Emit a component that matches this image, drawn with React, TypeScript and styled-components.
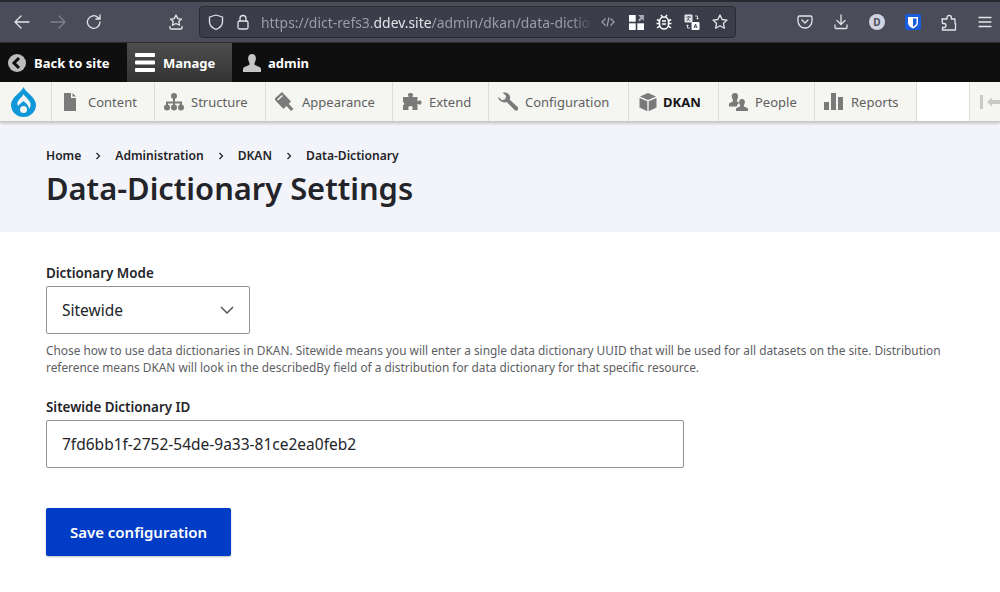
import React from 'react';
import styled, { createGlobalStyle } from 'styled-components';

const GlobalStyle = createGlobalStyle`
  html, body {
    margin: 0;
    padding: 0;
    background: #fff;
    overflow: hidden;
  }
  * {
    box-sizing: border-box;
  }
  body {
    font-family: "Noto Sans", sans-serif;
    color: #232429;
  }
`;

const Page = styled.div`
  width: 1000px;
  height: 592px;
  overflow: hidden;
  display: flex;
  flex-direction: column;
`;

/* browser chrome */
const Chrome = styled.div`
  height: 43px;
  flex: none;
  display: flex;
  align-items: center;
  background: #4b4c5a;
  border-top: 2px solid #2b2a33;
  border-bottom: 1px solid #2b2c36;
  padding-left: 13px;
`;

const NavButton = styled.div<{ $w: number }>`
  width: ${({ $w }) => $w}px;
  flex: none;
  display: flex;
  align-items: center;
  svg {
    display: block;
    flex: none;
  }
`;

const UrlBar = styled.div`
  width: 537px;
  height: 32px;
  flex: none;
  margin-left: 10px;
  display: flex;
  align-items: center;
  background: #3b3d4b;
  border: 1px solid #292a33;
  border-radius: 4px;
  padding-left: 8px;
  svg {
    flex: none;
  }
`;

const LockIcon = styled.svg`
  margin-left: 12px;
`;

const UrlText = styled.div`
  width: 331px;
  margin-left: 11px;
  flex: none;
  font-size: 13.9px;
  white-space: nowrap;
  color: #9b9ca6;
  mask-image: linear-gradient(to right, #000 94%, transparent 100%);
  b {
    font-weight: 400;
    color: #e2e3e8;
  }
`;

const Actions = styled.div`
  display: flex;
  align-items: center;
  margin-left: 2px;
`;

const ActionSlot = styled.div`
  width: 28px;
  height: 20px;
  display: flex;
  align-items: center;
  justify-content: center;
`;

const RightIcons = styled.div`
  display: flex;
  align-items: center;
  margin-left: 51px;
`;

const RightSlot = styled.div`
  width: 36px;
  height: 24px;
  display: flex;
  align-items: center;
  justify-content: center;
`;

const Avatar = styled.div`
  width: 16px;
  height: 16px;
  border-radius: 50%;
  background: #cfd3e2;
  color: #4b4c5a;
  font-size: 10px;
  font-weight: 700;
  display: flex;
  align-items: center;
  justify-content: center;
`;

const Shield = styled.div`
  width: 16px;
  height: 16px;
  border-radius: 2px;
  background: #175ddc;
  display: flex;
  align-items: center;
  justify-content: center;
`;

/* admin toolbar */
const TopBar = styled.div`
  height: 39px;
  flex: none;
  display: flex;
  background: #0f0f0f;
`;

const TopItem = styled.div<{ $w: number; $gap: number; $active?: boolean }>`
  width: ${({ $w }) => $w}px;
  display: flex;
  align-items: center;
  padding-left: 8px;
  gap: ${({ $gap }) => $gap}px;
  font-size: 13px;
  font-weight: 700;
  color: #fff;
  background: ${({ $active }) =>
    $active ? 'linear-gradient(to bottom, #4e4e4e, #333)' : 'transparent'};
`;

const AdminIcon = styled.svg`
  margin-left: 2px;
`;

const Tray = styled.div`
  height: 40px;
  flex: none;
  display: flex;
  background: #fff;
  border-bottom: 1px solid #c9c9c9;
  box-shadow: 0 1px 3px rgba(0, 0, 0, 0.25);
  position: relative;
  z-index: 1;
`;

const LogoCell = styled.div`
  width: 52px;
  flex: none;
  display: flex;
  align-items: center;
  padding-left: 11px;
  background: #f5f5f2;
  border-right: 1px solid #dcdcd8;
`;

const TrayItem = styled.div<{ $w: number; $strong?: boolean }>`
  width: ${({ $w }) => $w}px;
  flex: none;
  display: flex;
  align-items: center;
  padding-left: 9px;
  gap: ${({ $strong }) => ($strong ? 5 : 7)}px;
  background: #f5f5f2;
  border-right: 1px solid #dcdcd8;
  font-size: 13px;
  font-weight: ${({ $strong }) => ($strong ? 700 : 400)};
  color: ${({ $strong }) => ($strong ? '#161616' : '#5f5f5f')};
`;

const TrayIcon = styled.span`
  width: 20px;
  height: 20px;
  flex: none;
  display: flex;
  align-items: center;
  justify-content: center;
`;

const TraySpacer = styled.div`
  flex: 1;
`;

const TrayToggle = styled.div`
  width: 31px;
  flex: none;
  display: flex;
  align-items: center;
  padding-left: 10px;
  background: #f5f5f2;
  border-left: 1px solid #dcdcd8;
`;

/* page header */
const Header = styled.header`
  height: 110px;
  flex: none;
  background: #f3f4f9;
  padding: 26px 46px 0;
`;

const Crumbs = styled.nav`
  display: flex;
  align-items: center;
  height: 15px;
  font-size: 12.1px;
  font-weight: 600;
  color: #232429;
`;

const Sep = styled.span`
  width: 34px;
  display: flex;
  justify-content: center;
`;

const Title = styled.h1`
  margin: 6px 0 0;
  font-size: 30.85px;
  line-height: 38px;
  font-weight: 600;
  color: #232429;
`;

/* form */
const Form = styled.main`
  padding: 33px 46px 0;
  display: flex;
  flex-direction: column;
`;

const Label = styled.label`
  display: block;
  font-size: 13.4px;
  line-height: 16px;
  font-weight: 600;
  color: #232429;
  margin-bottom: 5px;
`;

const Select = styled.div`
  width: 204px;
  height: 48px;
  display: flex;
  align-items: center;
  justify-content: space-between;
  padding: 0 15px;
  border: 1px solid #919297;
  border-radius: 2px;
  font-size: 15.5px;
  color: #232429;
`;

const Help = styled.p`
  margin: 8px 0 0;
  width: 908px;
  font-size: 11.87px;
  line-height: 17px;
  color: #5d5e63;
`;

const SecondLabel = styled(Label)`
  margin-top: 23px;
`;

const TextInput = styled.div`
  width: 638px;
  height: 48px;
  display: flex;
  align-items: center;
  padding: 0 15px;
  border: 1px solid #919297;
  border-radius: 2px;
  font-size: 15.5px;
  color: #232429;
`;

const SaveButton = styled.button`
  width: 185px;
  height: 48px;
  margin-top: 40px;
  border: 0;
  border-radius: 2px;
  background: #003cc5;
  box-shadow: 0 1px 2px rgba(0, 0, 0, 0.25);
  color: #fff;
  font-family: inherit;
  font-size: 15px;
  font-weight: 600;
`;

const stroke = {
  fill: 'none',
  stroke: '#e4e4ea',
  strokeWidth: 1.3,
  strokeLinecap: 'round' as const,
  strokeLinejoin: 'round' as const,
};

const tray = '#7a7a7a';

const navItems = [
  {
    label: 'Content',
    w: 103,
    icon: <path d="M3 1h7v5h5v13H3z M11.500 1l3.500 3.500h-3.500z" fill={tray} />,
  },
  {
    label: 'Structure',
    w: 111,
    icon: (
      <g fill={tray}>
        <circle cx="10" cy="4" r="3" />
        <circle cx="3" cy="15.500" r="3" />
        <circle cx="10" cy="15.500" r="3" />
        <circle cx="17" cy="15.500" r="3" />
        <path d="M9 6h2v3.500h7V14h-2v-2.500h-5V14H9v-2.500H4V14H2V9.500h7z" />
      </g>
    ),
  },
  {
    label: 'Appearance',
    w: 127,
    icon: (
      <g fill={tray}>
        <path d="M-1 7l8-7 9 9.500-7.500 7.500z" />
        <path d="M11 13.500l2.200-2.200L18.500 17 16 19z" />
        <path d="M2 7.500L7 3l1 1-5 4.500z" fill="#f5f5f2" />
      </g>
    ),
  },
  {
    label: 'Extend',
    w: 96,
    icon: (
      <path
        d="M1 5h5.500v-1c-1.500-1.500 0-3 2-3s3.500 1.500 2 3v1h5v4h1c1.500-1 3-.5 3 1.500s-1.500 3-3 1.500h-1v6h-5v-1.500c.8-1.500-.5-2.500-2-2.500s-2.800 1-2 2.500v1.500h-5.500v-4.500c1-.5 1.500-1.500 1-2.500s-1-1-1-1z"
        fill={tray}
      />
    ),
  },
  {
    label: 'Configuration',
    w: 140,
    icon: (
      <path
        d="M0.500 5l3.500 3.200 3.200-.9.900-3.200L4.700.8c3.200-1.200 6.800.6 7.300 3.900.2 1-.1 2-.4 2.900l8 7.500c1 1 .8 2.300 0 3-.8.800-2 .8-3 0l-7.800-8c-3.800 1.400-9.300-2-8.300-5.100z"
        fill={tray}
      />
    ),
  },
  {
    label: 'DKAN',
    w: 90,
    strong: true,
    icon: (
      <g fill={tray}>
        <path d="M10 1l8 3.500-8 3.500-8-3.500z" />
        <path d="M1.500 6l7.800 3.300v10l-7.800-3.800z" />
        <path d="M18.500 6l-7.800 3.300v10l7.800-3.800z" />
      </g>
    ),
  },
  {
    label: 'People',
    w: 96,
    icon: (
      <g fill={tray}>
        <path d="M7 1c2.500 0 3.500 2 3 4.500-.3 1.500-1.200 2.500-1.200 3.500s2 1 3 2c-2 .5-3 2-3 3.500H1v-2.500c0-1.500 4-1.500 4-3.500 0-1-1-2-1.200-3.500C3.300 3 4.500 1 7 1z" />
        <path d="M14 7c2.300 0 3.200 1.800 2.800 3.800-.3 1.500-1 2.200-1 3 0 1.500 4.200 1.600 4.200 3.400V19H8v-1.800c0-1.800 4.200-1.900 4.200-3.400 0-.8-.7-1.500-1-3C10.800 8.800 11.700 7 14 7z" />
      </g>
    ),
  },
  {
    label: 'Reports',
    w: 102,
    icon: (
      <g fill={tray}>
        <rect x="0" y="10" width="5" height="8" />
        <rect x="7" y="1" width="5" height="17" />
        <rect x="14" y="5" width="5" height="13" />
      </g>
    ),
  },
];

const crumbs = ['Home', 'Administration', 'DKAN', 'Data-Dictionary'];

const App: React.FC = () => {
  return (
    <Page>
      <GlobalStyle />
      <Chrome>
        <NavButton $w={36}>
          <svg width="18" height="18" viewBox="0 0 18 18" {...stroke}>
            <path d="M16 9H2M8 3L2 9l6 6" />
          </svg>
        </NavButton>
        <NavButton $w={36}>
          <svg width="18" height="18" viewBox="0 0 18 18" {...stroke} stroke="#80818c">
            <path d="M2 9h14M10 3l6 6-6 6" />
          </svg>
        </NavButton>
        <NavButton $w={82}>
          <svg width="18" height="18" viewBox="0 0 18 18" {...stroke}>
            <path d="M15 9a6.300 6.300 0 1 1-2-4.600L15 6M15 2v4h-4" />
          </svg>
        </NavButton>
        <NavButton $w={22}>
          <svg width="18" height="18" viewBox="0 0 18 18" {...stroke}>
            <path d="M9 2l1.800 3.600 3.700.5-2.700 2.500.7 3.600L9 10.500l-3.500 1.700.7-3.600L3.500 6.100l3.700-.5zM3 13.500V15a1 1 0 0 0 1 1h10a1 1 0 0 0 1-1v-1.500" />
          </svg>
        </NavButton>
        <UrlBar>
          <svg width="16" height="18" viewBox="0 0 16 18" {...stroke}>
            <path d="M8 2l6.500 2v5c0 3.500-3 6-6.500 7.500C4.500 15 1.500 12.500 1.500 9V4z" />
          </svg>
          <LockIcon width="14" height="16" viewBox="0 0 14 16" {...stroke}>
            <rect x="2" y="7" width="10" height="8" rx="1.500" />
            <path d="M4 7V4.500a3 3 0 0 1 6 0V7" />
          </LockIcon>
          <UrlText>
            https://dict-refs3.<b>ddev.site</b>/admin/dkan/data-dictio
          </UrlText>
          <Actions>
            <ActionSlot>
              <svg width="14" height="10" viewBox="0 0 14 10" fill="none" stroke="#a2a3ad" strokeWidth="1.200">
                <path d="M4.500 1.500L1 5l3.500 3.500M9.500 1.500L13 5 9.500 8.500M8 .5l-2 9" />
              </svg>
            </ActionSlot>
            <ActionSlot>
              <svg width="15" height="15" viewBox="0 0 15 15" fill="#fff">
                <rect x="0" y="0" width="6.700" height="6.700" />
                <rect x="0" y="8.300" width="6.700" height="6.700" />
                <rect x="8.300" y="8.300" width="6.700" height="6.700" />
                <path d="M9 0h6v6l-2-2-2.500 2.500-1.500-1.500L11.500 2.500z" fill="#a9aab3" />
              </svg>
            </ActionSlot>
            <ActionSlot>
              <svg width="16" height="16" viewBox="0 0 16 16" fill="none" stroke="#fff" strokeWidth="1.500">
                <rect x="3.500" y="3" width="9" height="12" rx="4.500" />
                <path d="M5 1l1.500 2M11 1L9.500 3M1 5.500l2.500 1.500M15 5.500L12.500 7M.5 9.500h3M15.500 9.500h-3M1 14l2.500-2M15 14l-2.500-2M6 7h4M6 10h4" />
              </svg>
            </ActionSlot>
            <ActionSlot>
              <svg width="16" height="17" viewBox="0 0 16 17">
                <rect x="0.500" y="0.500" width="8" height="8" rx="1" fill="#e4e4ea" />
                <rect x="7.500" y="8" width="8" height="8" rx="1" fill="#fff" />
                <path d="M2 3h5M4.500 2v1M3 7l2.500-4M3.500 4.500L6 7" stroke="#4b4c5a" strokeWidth=".8" fill="none" />
                <path d="M10 14l1.500-4 1.500 4M10.600 12.800h1.800" stroke="#3a3c4a" strokeWidth=".9" fill="none" />
                <path d="M11 2h2.500v3M12.500 4l1 1.200 1-1.200M3.500 11v3H6M2.500 12l1-1.200 1 1.200" stroke="#e4e4ea" strokeWidth=".9" fill="none" />
              </svg>
            </ActionSlot>
            <ActionSlot>
              <svg width="18" height="18" viewBox="0 0 18 18" {...stroke}>
                <path d="M9 2l2.100 4.500 4.900.6-3.600 3.300 1 4.800L9 12.800l-4.400 2.400 1-4.800L2 7.100l4.900-.6z" />
              </svg>
            </ActionSlot>
          </Actions>
        </UrlBar>
        <RightIcons>
          <RightSlot>
            <svg width="16" height="16" viewBox="0 0 16 16" {...stroke}>
              <path d="M2.500 2h11A1.500 1.500 0 0 1 15 3.500V7a7 7 0 0 1-14 0V3.500A1.500 1.500 0 0 1 2.500 2zM5 6l3 3 3-3" />
            </svg>
          </RightSlot>
          <RightSlot>
            <svg width="16" height="16" viewBox="0 0 16 16" {...stroke}>
              <path d="M8 1v9M4 6.500L8 10.500l4-4M2 11v2.500a1 1 0 0 0 1 1h10a1 1 0 0 0 1-1V11" />
            </svg>
          </RightSlot>
          <RightSlot>
            <Avatar>D</Avatar>
          </RightSlot>
          <RightSlot>
            <Shield>
              <svg width="12" height="13" viewBox="0 0 12 13">
                <path d="M1 1h10v6c0 2.500-2.500 4.500-5 5.500C3.500 11.500 1 9.500 1 7z" fill="#fff" />
                <path d="M6 2.500h3.500V7c0 1.500-1.800 2.800-3.500 3.600z" fill="#175ddc" />
              </svg>
            </Shield>
          </RightSlot>
          <RightSlot>
            <svg width="16" height="17" viewBox="0 0 16 17" {...stroke}>
              <path d="M1 5h5V3.500a2.200 2.200 0 1 1 4.400 0V5H14v4.500l.5 0V16H1.500v-2.500h1.500a2 2 0 1 0 0-4H1.500z" />
            </svg>
          </RightSlot>
          <RightSlot>
            <svg width="14" height="12" viewBox="0 0 14 12" {...stroke}>
              <path d="M1 1.500h12M1 6h12M1 10.500h12" />
            </svg>
          </RightSlot>
        </RightIcons>
      </Chrome>

      <TopBar>
        <TopItem $w={127} $gap={8}>
          <svg width="18" height="18" viewBox="0 0 18 18">
            <circle cx="9" cy="9" r="9" fill="#bdbdbd" />
            <path d="M11 4L6 9l5 5" fill="none" stroke="#0f0f0f" strokeWidth="3" />
          </svg>
          Back to site
        </TopItem>
        <TopItem $w={105} $gap={8} $active>
          <svg width="20" height="19" viewBox="0 0 20 19" fill="#fff">
            <rect y="0" width="20" height="4" rx="1" />
            <rect y="7.500" width="20" height="4" rx="1" />
            <rect y="15" width="20" height="4" rx="1" />
          </svg>
          Manage
        </TopItem>
        <TopItem $w={120} $gap={6}>
          <AdminIcon width="20" height="20" viewBox="0 0 20 20" fill="#c5c5c5">
            <path d="M10 1c3 0 4.200 2.500 3.800 5.500-.3 2-1.400 3-1.400 4.500 0 2.200 6.600 2.200 6.600 5v3H1v-3c0-2.800 6.600-2.800 6.600-5 0-1.500-1.100-2.500-1.400-4.500C5.800 3.500 7 1 10 1z" />
          </AdminIcon>
          admin
        </TopItem>
      </TopBar>

      <Tray>
        <LogoCell>
          <svg width="25" height="30" viewBox="0 0 25 30">
            <path
              d="M12.500 0c1 3 4 5 6.500 7.500C22 10.500 25 14 25 18a12.500 12 0 0 1-25 0c0-4 3-7.500 6-10.500C8.500 5 11.500 3 12.500 0z"
              fill="#0f97d9"
            />
            <path
              d="M7 19c-1.500-2.500-.5-5 2-7.500 1.500-1.500 3-3 3.500-4.500 1 2.500 6 5.500 7 9.500.5 2.500-.5 4.500-1.500 5.500 0-3-2-5-5.500-8-2 2-4 3-5.500 5z"
              fill="#f5f5f2"
            />
            <circle cx="12.500" cy="22.500" r="3.500" fill="#f5f5f2" />
          </svg>
        </LogoCell>
        {navItems.map((item) => (
          <TrayItem key={item.label} $w={item.w} $strong={item.strong}>
            <TrayIcon>
              <svg width="20" height="20" viewBox="0 0 20 20">
                {item.icon}
              </svg>
            </TrayIcon>
            {item.label}
          </TrayItem>
        ))}
        <TraySpacer />
        <TrayToggle>
          <svg width="20" height="16" viewBox="0 0 20 16" fill="#c8c8c8">
            <rect x="0" y="1" width="3" height="14" />
            <path d="M7 8l5-4.500V6h8v4h-8v2.500z" />
          </svg>
        </TrayToggle>
      </Tray>

      <Header>
        <Crumbs>
          {crumbs.map((crumb, i) => (
            <React.Fragment key={crumb}>
              {i > 0 && (
                <Sep>
                  <svg width="6" height="8" viewBox="0 0 6 8" fill="none" stroke="#232429" strokeWidth="1.300">
                    <path d="M1.500 1l3 3-3 3" />
                  </svg>
                </Sep>
              )}
              {crumb}
            </React.Fragment>
          ))}
        </Crumbs>
        <Title>Data-Dictionary Settings</Title>
      </Header>

      <Form>
        <Label>Dictionary Mode</Label>
        <Select>
          Sitewide
          <svg width="14" height="8" viewBox="0 0 14 8" fill="none" stroke="#55565b" strokeWidth="1.500">
            <path d="M1 1l6 6 6-6" />
          </svg>
        </Select>
        <Help>
          Chose how to use data dictionaries in DKAN. Sitewide means you will enter a single data dictionary UUID that
          will be used for all datasets on the site. Distribution reference means DKAN will look in the describedBy
          field of a distribution for data dictionary for that specific resource.
        </Help>
        <SecondLabel>Sitewide Dictionary ID</SecondLabel>
        <TextInput>7fd6bb1f-2752-54de-9a33-81ce2ea0feb2</TextInput>
        <SaveButton>Save configuration</SaveButton>
      </Form>
    </Page>
  );
};

export default App;
